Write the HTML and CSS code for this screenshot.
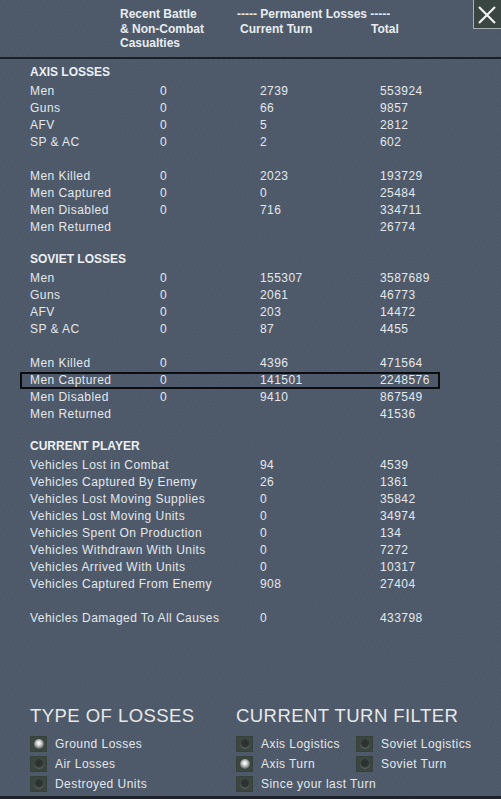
FILE: index.html
```html
<!DOCTYPE html>
<html>
<head>
<meta charset="utf-8">
<link rel="stylesheet" href="styles.css">
</head>
<body>
<div class="page">
  <div class="close"><svg width="28" height="29" viewBox="0 0 28 29"><path d="M6 7 L22 23 M22 7 L6 23" stroke="#f2f2f2" stroke-width="2.2" fill="none"/></svg></div>
  <div class="header">
    <div class="hcol1">Recent Battle<br>&amp; Non-Combat<br>Casualties</div>
    <div class="hcol2">
      <div>----- Permanent Losses -----</div>
      <div class="hsub"><span class="hcur">Current Turn</span><span>Total</span></div>
    </div>
  </div>
  <div class="tables">
    <div class="section">
      <div class="sec-title">AXIS LOSSES</div>
      <div class="row"><span>Men</span><span>0</span><span>2739</span><span>553924</span></div>
      <div class="row"><span>Guns</span><span>0</span><span>66</span><span>9857</span></div>
      <div class="row"><span>AFV</span><span>0</span><span>5</span><span>2812</span></div>
      <div class="row"><span>SP &amp; AC</span><span>0</span><span>2</span><span>602</span></div>
      <div class="row blank"></div>
      <div class="row"><span>Men Killed</span><span>0</span><span>2023</span><span>193729</span></div>
      <div class="row"><span>Men Captured</span><span>0</span><span>0</span><span>25484</span></div>
      <div class="row"><span>Men Disabled</span><span>0</span><span>716</span><span>334711</span></div>
      <div class="row"><span>Men Returned</span><span></span><span></span><span>26774</span></div>
    </div>
    <div class="section">
      <div class="sec-title">SOVIET LOSSES</div>
      <div class="row"><span>Men</span><span>0</span><span>155307</span><span>3587689</span></div>
      <div class="row"><span>Guns</span><span>0</span><span>2061</span><span>46773</span></div>
      <div class="row"><span>AFV</span><span>0</span><span>203</span><span>14472</span></div>
      <div class="row"><span>SP &amp; AC</span><span>0</span><span>87</span><span>4455</span></div>
      <div class="row blank"></div>
      <div class="row"><span>Men Killed</span><span>0</span><span>4396</span><span>471564</span></div>
      <div class="row selected"><span>Men Captured</span><span>0</span><span>141501</span><span>2248576</span></div>
      <div class="row"><span>Men Disabled</span><span>0</span><span>9410</span><span>867549</span></div>
      <div class="row"><span>Men Returned</span><span></span><span></span><span>41536</span></div>
    </div>
    <div class="section">
      <div class="sec-title">CURRENT PLAYER</div>
      <div class="row wide"><span>Vehicles Lost in Combat</span><span>94</span><span>4539</span></div>
      <div class="row wide"><span>Vehicles Captured By Enemy</span><span>26</span><span>1361</span></div>
      <div class="row wide"><span>Vehicles Lost Moving Supplies</span><span>0</span><span>35842</span></div>
      <div class="row wide"><span>Vehicles Lost Moving Units</span><span>0</span><span>34974</span></div>
      <div class="row wide"><span>Vehicles Spent On Production</span><span>0</span><span>134</span></div>
      <div class="row wide"><span>Vehicles Withdrawn With Units</span><span>0</span><span>7272</span></div>
      <div class="row wide"><span>Vehicles Arrived With Units</span><span>0</span><span>10317</span></div>
      <div class="row wide"><span>Vehicles Captured From Enemy</span><span>908</span><span>27404</span></div>
      <div class="row blank"></div>
      <div class="row wide"><span>Vehicles Damaged To All Causes</span><span>0</span><span>433798</span></div>
    </div>
  </div>
  <div class="bottom">
    <div class="group g1">
      <div class="gtitle">TYPE OF LOSSES</div>
      <div class="opts1">
        <div class="opt on"><span class="radio"><span class="dot"></span></span>Ground Losses</div>
        <div class="opt"><span class="radio"><span class="dot"></span></span>Air Losses</div>
        <div class="opt"><span class="radio"><span class="dot"></span></span>Destroyed Units</div>
      </div>
    </div>
    <div class="group g2">
      <div class="gtitle">CURRENT TURN FILTER</div>
      <div class="opts2">
        <div class="opt"><span class="radio"><span class="dot"></span></span>Axis Logistics</div>
        <div class="opt"><span class="radio"><span class="dot"></span></span>Soviet Logistics</div>
        <div class="opt on"><span class="radio"><span class="dot"></span></span>Axis Turn</div>
        <div class="opt"><span class="radio"><span class="dot"></span></span>Soviet Turn</div>
        <div class="opt span2"><span class="radio"><span class="dot"></span></span>Since your last Turn</div>
      </div>
    </div>
  </div>
</div>
</body>
</html>
```

FILE: styles.css
```css
* { box-sizing: border-box; }
html, body { margin: 0; padding: 0; }
body {
  background: #4e5a6a;
  font-family: "Liberation Sans", Arial, sans-serif;
  color: #e4e8ec;
}
.page {
  position: relative;
  width: 501px;
  height: 799px;
  display: flex;
  flex-direction: column;
  background-color: #4e5a6a;
  background-image:
    repeating-linear-gradient(37deg, rgba(255,255,255,0.015) 0 1px, transparent 1px 3px),
    repeating-linear-gradient(-53deg, rgba(0,0,0,0.02) 0 1px, transparent 1px 2px);
}
.close {
  position: absolute;
  top: 0;
  right: 0;
  width: 28px;
  height: 29px;
  background: #3a4641;
  border: 1px solid #aab1b0;
  border-top: none;
  border-right: none;
  display: flex;
}
.close svg { display: block; margin-left: -1px; }
.header {
  display: flex;
  padding: 7px 0 6px 120px;
  font-weight: bold;
  font-size: 12px;
  line-height: 14.7px;
  color: #e8ecf0;
  border-bottom: 2px solid #1b2028;
  height: 59px;
}
.hcol1 { width: 117px; }
.hsub { display: flex; padding-left: 3px; }
.hcur { width: 131px; }
.tables {
  width: 420px;
  margin-left: 20px;
  margin-top: 5px;
}
.section { margin-bottom: 15px; }
.sec-title {
  padding-left: 10px;
  font-weight: bold;
  font-size: 12px;
  line-height: 17px;
  height: 19px;
  color: #eceff2;
}
.row {
  display: grid;
  grid-template-columns: 130px 100px 120px 1fr;
  padding-left: 10px;
  height: 17px;
  font-size: 12px;
  line-height: 17px;
  letter-spacing: 0.45px;
  white-space: nowrap;
}
.row.wide { grid-template-columns: 230px 120px 1fr; }
.row.selected {
  outline: 2px solid #0b0d10;
  outline-offset: -2px;
}
.bottom {
  margin-top: auto;
  display: flex;
  padding: 0 0 1px 30px;
  height: 94px;
  border-bottom: 3px solid #1e232b;
}
.group { display: flex; flex-direction: column; }
.g1 { width: 206px; }
.gtitle {
  font-size: 18.5px;
  line-height: 22px;
  height: 29px;
  letter-spacing: 0.45px;
  color: #e8e8e8;
  white-space: nowrap;
}
.opts1 { display: flex; flex-direction: column; }
.opts2 {
  display: grid;
  grid-template-columns: 120px 120px;
}
.span2 { grid-column: 1 / 3; }
.opt {
  display: flex;
  align-items: center;
  height: 20px;
  font-size: 12px;
  letter-spacing: 0.45px;
  white-space: nowrap;
  color: #e4e8ec;
}
.radio {
  width: 17px;
  height: 16px;
  margin-right: 8px;
  background: #3c4641;
  box-shadow: inset 0 0 0 1px #37413c;
  display: flex;
  align-items: center;
  justify-content: center;
  flex: none;
}
.dot {
  width: 10px;
  height: 10px;
  border-radius: 50%;
  background: radial-gradient(circle at 50% 40%, #2b312e 0, #2f3532 45%, #5d6661 75%, #2a302d 100%);
}
.opt.on .dot {
  background: radial-gradient(circle at 48% 42%, #ffffff 0, #e6e6e6 22%, #8c928f 55%, #454c48 80%, #2a302d 100%);
}
```
